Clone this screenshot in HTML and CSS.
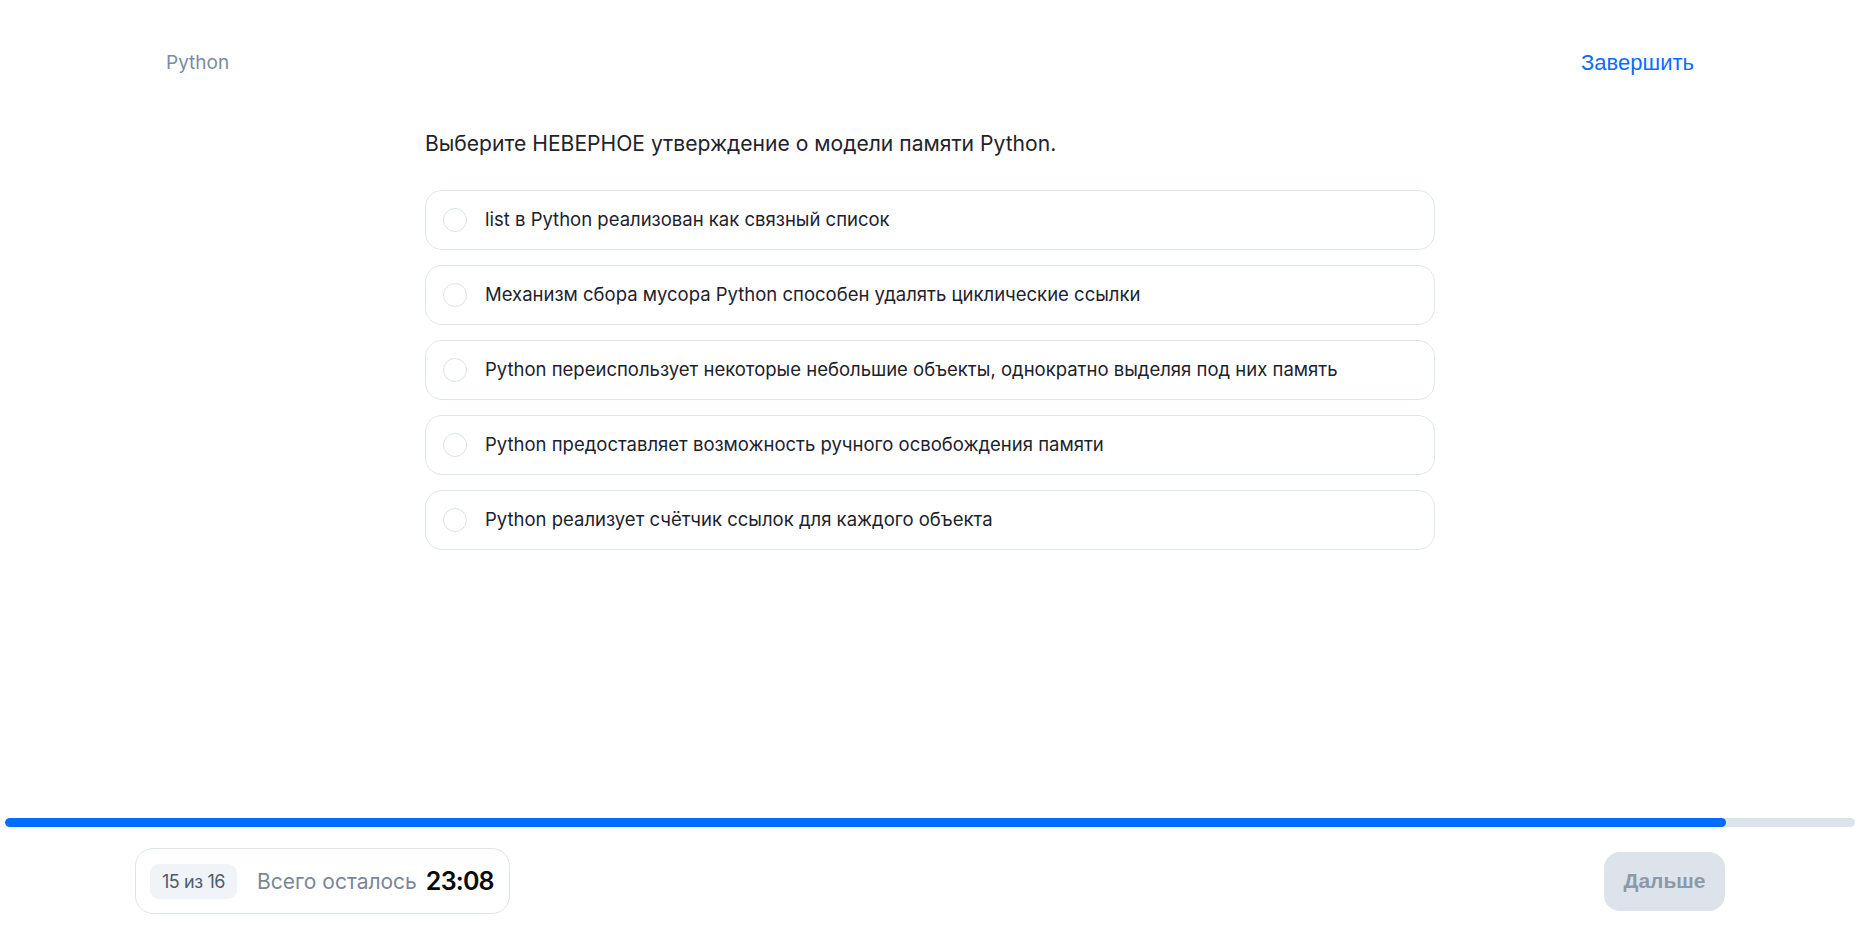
FILE: index.html
```html
<!DOCTYPE html>
<html lang="ru">
<head>
<meta charset="utf-8">
<title>Python — тест</title>
<link rel="stylesheet" href="styles.css">
</head>
<body>
<header class="top">
  <span class="topic">Python</span>
  <button class="finish" type="button">Завершить</button>
</header>
<main class="quiz">
  <p class="question">Выберите НЕВЕРНОЕ утверждение о модели памяти Python.</p>
  <ul class="options">
    <li class="option"><span class="radio"></span><span class="label">list в Python реализован как связный список</span></li>
    <li class="option"><span class="radio"></span><span class="label">Механизм сбора мусора Python способен удалять циклические ссылки</span></li>
    <li class="option"><span class="radio"></span><span class="label">Python переиспользует некоторые небольшие объекты, однократно выделяя под них память</span></li>
    <li class="option"><span class="radio"></span><span class="label">Python предоставляет возможность ручного освобождения памяти</span></li>
    <li class="option"><span class="radio"></span><span class="label">Python реализует счётчик ссылок для каждого объекта</span></li>
  </ul>
</main>
<div class="progress"><div class="progress-fill" style="width: 93.05%"></div></div>
<footer class="bottom">
  <div class="status">
    <span class="count">15 из 16</span>
    <span class="remain">Всего осталось</span>
    <span class="time">23:08</span>
  </div>
  <button class="next" type="button">Дальше</button>
</footer>
</body>
</html>
```
FILE: styles.css
```css
* { box-sizing: border-box; }
html, body { margin: 0; padding: 0; }
body {
  height: 100vh;
  display: flex;
  flex-direction: column;
  background: #ffffff;
  font-family: Inter, "Noto Sans", sans-serif;
  color: #1f2531;
}
.top {
  display: flex;
  justify-content: space-between;
  align-items: center;
  padding: 51px 166px 0 166px;
  height: 75px;
}
.topic {
  font-size: 19px;
  line-height: 24px;
  color: #7b8ba1;
}
.finish {
  border: 0;
  background: none;
  padding: 0;
  font-family: "Liberation Sans", Arial, sans-serif;
  font-size: 22px;
  line-height: 26px;
  color: #0b6cff;
  cursor: pointer;
}
.quiz {
  width: 1010px;
  margin: 0 auto;
}
.question {
  margin: 55px 0 0 0;
  font-size: 21.1px;
  line-height: 28px;
  color: #1f232b;
}
.options {
  list-style: none;
  margin: 32px 0 0 0;
  padding: 0;
  display: flex;
  flex-direction: column;
  gap: 15px;
}
.option {
  display: flex;
  align-items: center;
  height: 60px;
  padding: 0 17px;
  border: 1px solid #e1e6ee;
  border-radius: 17px;
  gap: 18px;
}
.radio {
  width: 24px;
  height: 24px;
  border-radius: 50%;
  border: 1px solid #dbe1ea;
  flex: none;
}
.label {
  font-size: 18.5px;
  line-height: 24px;
  color: #1c222d;
  margin-top: -2px;
}
.progress {
  margin: auto 5px 0 5px;
  height: 9px;
  border-radius: 5px;
  background: #dde3eb;
  overflow: hidden;
}
.progress-fill {
  height: 100%;
  background: #006bff;
  border-radius: 5px;
}
.bottom {
  display: flex;
  justify-content: space-between;
  align-items: center;
  padding: 21px 135px 21px 135px;
}
.status {
  display: flex;
  align-items: center;
  height: 66px;
  padding: 0 15px 0 14px;
  border: 1px solid #dfe4ec;
  border-radius: 18px;
}
.count {
  display: inline-flex;
  align-items: center;
  justify-content: center;
  width: 87px;
  height: 35px;
  border-radius: 9px;
  background: #f0f3f7;
  font-size: 18px;
  color: #4f5a6b;
  letter-spacing: -0.4px;
}
.remain {
  margin-left: 20px;
  font-size: 21px;
  color: #7a8699;
}
.time {
  margin-left: 9px;
  font-size: 25px;
  font-weight: 600;
  letter-spacing: -0.8px;
  color: #0a0a0a;
}
.next {
  width: 121px;
  height: 59px;
  border: 0;
  border-radius: 16px;
  background: #dde3eb;
  font-family: "Liberation Sans", Arial, sans-serif;
  font-size: 21px;
  font-weight: 700;
  color: #8b99aa;
}
```
